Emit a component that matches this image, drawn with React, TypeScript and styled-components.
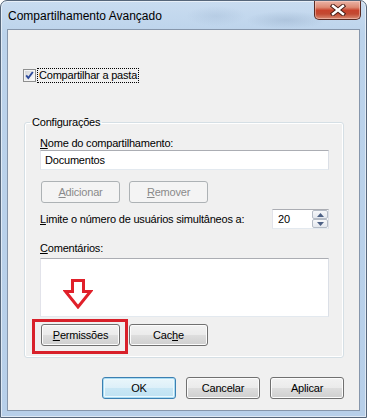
import styled, { createGlobalStyle } from "styled-components";

const GlobalStyle = createGlobalStyle`
  html, body {
    margin: 0;
    padding: 0;
  }
  body {
    background: #ffffff;
    font-family: "Liberation Sans", Arial, sans-serif;
    font-size: 11px;
    letter-spacing: -0.2px;
    color: #000;
  }
`;

const Window = styled.div`
  width: 367px;
  height: 418px;
  box-sizing: border-box;
  display: flex;
  flex-direction: column;
  padding: 0 6px 6px;
  border: 1px solid #56667a;
  border-radius: 7px 7px 0 0;
  box-shadow: inset 0 0 0 1px rgba(255, 255, 255, 0.55);
  background:
    radial-gradient(ellipse 30px 10px at 215px 15px, rgba(140, 165, 195, 0.22), transparent),
    radial-gradient(ellipse 40px 9px at 285px 19px, rgba(125, 150, 180, 0.28), transparent),
    linear-gradient(180deg, #c9dcf0 0%, #bcd3eb 8%, #b7cfe9 100%);
  overflow: hidden;
`;

const TitleBar = styled.div`
  height: 28px;
  display: flex;
  align-items: flex-start;
  justify-content: space-between;
`;

const Title = styled.div`
  margin-top: 7px;
  padding-left: 1px;
  font-size: 12px;
  line-height: 16px;
  letter-spacing: 0;
  color: #000;
`;

const CloseButton = styled.div`
  width: 47px;
  height: 19px;
  margin-right: -1px;
  box-sizing: border-box;
  display: flex;
  align-items: center;
  justify-content: center;
  border: 1px solid #5a2a22;
  border-top: none;
  border-radius: 0 0 5px 5px;
  background: linear-gradient(180deg, #eab3a6 0%, #dd8a74 35%, #c8432c 52%, #c24a32 72%, #d98b73 100%);
  box-shadow: inset 0 0 0 1px rgba(255, 220, 210, 0.45);
`;

const Client = styled.div`
  flex: 1;
  display: flex;
  flex-direction: column;
  border: 1px solid #8696ab;
  background: #f0f0f0;
`;

const CheckRow = styled.label`
  margin: 38px 0 0 15px;
  height: 15px;
  display: flex;
  align-items: center;
`;

const CheckText = styled.span`
  margin-left: 1px;
  padding: 0 1px;
  line-height: 13px;
  border: 1px dotted #000;
`;

const GroupBox = styled.fieldset`
  margin: 32px 0 0 16px;
  width: 320px;
  box-sizing: border-box;
  padding: 0;
  border: 1px solid #d5dfe5;
  border-radius: 3px;
  box-shadow: inset 0 0 0 1px #ffffff;
  min-inline-size: 0;
`;

const Legend = styled.legend`
  margin-left: 5px;
  padding: 0 2px;
  line-height: 14px;
`;

const GroupBody = styled.div`
  padding: 7px 14px 11px 15px;
  display: flex;
  flex-direction: column;
`;

const FieldLabel = styled.div<{ $gap?: number }>`
  line-height: 14px;
  margin-top: ${(p) => p.$gap ?? 0}px;
`;

const TextField = styled.div`
  height: 20px;
  box-sizing: border-box;
  display: flex;
  align-items: center;
  padding: 0 4px;
  background: #fff;
  border: 1px solid;
  border-color: #abadb3 #dbdfe6 #e3e9ef #e2e3ea;
`;

const ButtonRow = styled.div<{ $gap: number }>`
  margin-top: ${(p) => p.$gap}px;
  display: flex;
  gap: 9px;
  padding-left: 1px;
`;

const Button = styled.div<{ $width: number; $disabled?: boolean; $default?: boolean }>`
  position: relative;
  width: ${(p) => p.$width}px;
  height: 22px;
  box-sizing: border-box;
  display: flex;
  align-items: center;
  justify-content: center;
  border-radius: 3px;
  border: 1px solid ${(p) => (p.$disabled ? "#adb2b5" : p.$default ? "#3c7fb1" : "#707070")};
  color: ${(p) => (p.$disabled ? "#8a8a8a" : "#000")};
  background: ${(p) =>
    p.$disabled
      ? "#f4f4f4"
      : p.$default
        ? "linear-gradient(180deg, #eaf6fb 0%, #ddf0f9 48%, #c9e7f5 52%, #bfe1f2 100%)"
        : "linear-gradient(180deg, #f2f2f2 0%, #ebebeb 48%, #dddddd 52%, #cfcfcf 100%)"};
  box-shadow: ${(p) =>
    p.$disabled ? "none" : p.$default ? "inset 0 0 0 1px #a9dcf3, inset 0 0 0 2px #ecf8fd" : "inset 0 0 0 1px #fcfcfc"};
`;

const AccessKey = styled.span`
  text-decoration: underline;
  text-underline-offset: 1px;
`;

const LimitRow = styled.div`
  margin-top: 6px;
  height: 20px;
  display: flex;
  align-items: center;
  justify-content: space-between;
`;

const SpinBox = styled.div`
  width: 57px;
  height: 20px;
  box-sizing: border-box;
  display: flex;
  background: #fff;
  border: 1px solid;
  border-color: #abadb3 #dbdfe6 #e3e9ef #e2e3ea;
`;

const SpinValue = styled.div`
  flex: 1;
  padding-left: 5px;
  display: flex;
  align-items: center;
`;

const SpinButtons = styled.div`
  width: 16px;
  display: flex;
  flex-direction: column;
`;

const SpinHalf = styled.div`
  flex: 1;
  display: flex;
  align-items: center;
  justify-content: center;
  box-sizing: border-box;
  border: 1px solid #b5bcc6;
  border-radius: 2px;
  background: linear-gradient(180deg, #f7f8fa 0%, #e4e8ee 100%);
`;

const CommentBox = styled.div`
  position: relative;
  margin-top: 3px;
  height: 59px;
  box-sizing: border-box;
  background: #fff;
  border: 1px solid;
  border-color: #abadb3 #dbdfe6 #e3e9ef #e2e3ea;
`;

const ArrowMark = styled.svg`
  position: absolute;
  left: 22px;
  top: 20px;
`;

const Highlight = styled.div`
  position: absolute;
  left: -10px;
  top: -6px;
  right: -9px;
  bottom: -9px;
  border: 3px solid #d8202a;
  pointer-events: none;
`;

const Footer = styled.div`
  margin: 19px 15px 0 0;
  display: flex;
  justify-content: flex-end;
  gap: 10px;
`;

function CheckIcon() {
  return (
    <svg width="13" height="13" viewBox="0 0 13 13">
      <defs>
        <linearGradient id="cbg" x1="0" y1="0" x2="1" y2="1">
          <stop offset="0" stopColor="#d3d5d8" />
          <stop offset="1" stopColor="#fbfbfb" />
        </linearGradient>
      </defs>
      <rect x="0.5" y="0.5" width="12" height="12" fill="#f4f4f4" stroke="#8e8f8f" />
      <rect x="2" y="2" width="9" height="9" fill="url(#cbg)" />
      <path d="M3.2 6.4 L5.3 9 L9.8 3" fill="none" stroke="#2c4a9c" strokeWidth="1.9" />
    </svg>
  );
}

function CloseGlyph() {
  return (
    <svg width="16" height="12" viewBox="0 0 16 12">
      <path d="M3 2 L13 10 M13 2 L3 10" stroke="#4a1f18" strokeWidth="4.4" strokeLinecap="square" />
      <path d="M3 2 L13 10 M13 2 L3 10" stroke="#ffffff" strokeWidth="2.4" strokeLinecap="square" />
    </svg>
  );
}

function SpinArrow({ up }: { up?: boolean }) {
  return (
    <svg width="7" height="4" viewBox="0 0 7 4">
      <path d={up ? "M0 4 L3.5 0 L7 4 Z" : "M0 0 L7 0 L3.5 4 Z"} fill="#4d6185" />
    </svg>
  );
}

function App() {
  return (
    <>
      <GlobalStyle />
      <Window>
        <TitleBar>
          <Title>Compartilhamento Avançado</Title>
          <CloseButton>
            <CloseGlyph />
          </CloseButton>
        </TitleBar>
        <Client>
          <CheckRow>
            <CheckIcon />
            <CheckText>Compartilhar a pasta</CheckText>
          </CheckRow>

          <GroupBox>
            <Legend>Configurações</Legend>
            <GroupBody>
              <FieldLabel>
                <AccessKey>N</AccessKey>ome do compartilhamento:
              </FieldLabel>
              <TextField>Documentos</TextField>

              <ButtonRow $gap={11}>
                <Button $width={79} $disabled>
                  <span>
                    <AccessKey>A</AccessKey>dicionar
                  </span>
                </Button>
                <Button $width={79} $disabled>
                  <span>
                    <AccessKey>R</AccessKey>emover
                  </span>
                </Button>
              </ButtonRow>

              <LimitRow>
                <span>
                  <AccessKey>L</AccessKey>imite o número de usuários simultâneos a:
                </span>
                <SpinBox>
                  <SpinValue>20</SpinValue>
                  <SpinButtons>
                    <SpinHalf>
                      <SpinArrow up />
                    </SpinHalf>
                    <SpinHalf>
                      <SpinArrow />
                    </SpinHalf>
                  </SpinButtons>
                </SpinBox>
              </LimitRow>

              <FieldLabel $gap={12}>
                <AccessKey>C</AccessKey>omentários:
              </FieldLabel>
              <CommentBox>
                <ArrowMark width="30" height="30" viewBox="0 0 30 30">
                  <path
                    d="M9.5 1.5 H20.5 V12.5 H27.5 L15 28 L2.5 12.5 H9.5 Z"
                    fill="#ffffff"
                    stroke="#e0202a"
                    strokeWidth="3"
                    strokeLinejoin="miter"
                  />
                </ArrowMark>
              </CommentBox>

              <ButtonRow $gap={7}>
                <Button $width={79}>
                  <span>
                    <AccessKey>P</AccessKey>ermissões
                  </span>
                  <Highlight />
                </Button>
                <Button $width={79}>
                  <span>
                    Cac<AccessKey>h</AccessKey>e
                  </span>
                </Button>
              </ButtonRow>
            </GroupBody>
          </GroupBox>

          <Footer>
            <Button $width={74} $default>
              OK
            </Button>
            <Button $width={74}>Cancelar</Button>
            <Button $width={74}>Aplicar</Button>
          </Footer>
        </Client>
      </Window>
    </>
  );
}

export default App;
